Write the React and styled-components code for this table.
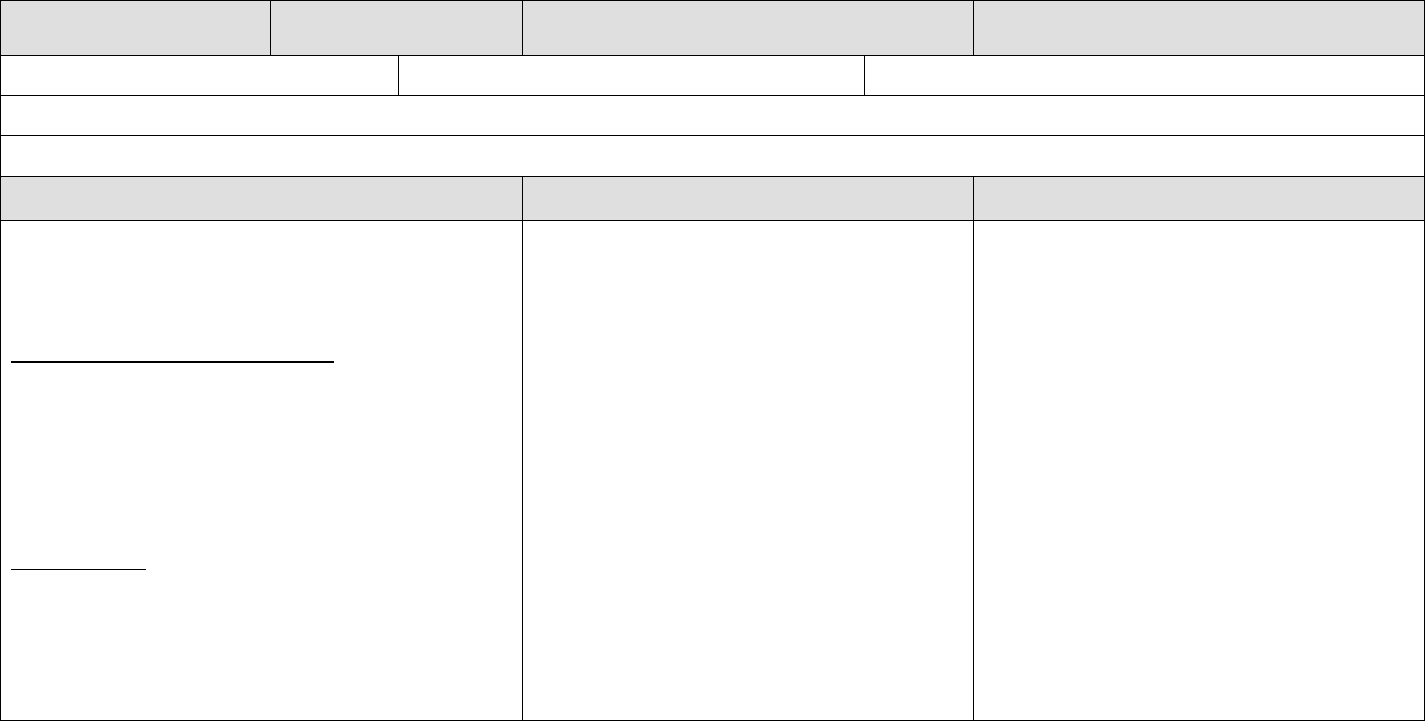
import React from "react";
import styled, { createGlobalStyle } from "styled-components";

const Global = createGlobalStyle`
  html, body { margin: 0; padding: 0; background: #ffffff; }
  body { font-family: "Liberation Sans", Arial, sans-serif; font-size: 14px; color: #000; }
  * { box-sizing: border-box; }
`;

const Table = styled.div`
  display: grid;
  grid-template-columns: 270px 128px 124px 342px 109px 451px;
  grid-template-rows: 55px 40px 40px 41px 44px 500px;
  width: 1425px;
  height: 721px;
  border-left: 1px solid #000;
  border-top: 1px solid #000;
  overflow: hidden;
`;

const Cell = styled.div`
  grid-column: ${(p) => p.$col};
  background: ${(p) => (p.$head ? "#dfdfdf" : "#ffffff")};
  border-right: 1px solid #000;
  border-bottom: 1px solid #000;
  display: flex;
  flex-direction: column;
  align-items: flex-start;
  padding: ${(p) => (p.$pad ? "0 0 0 10px" : "0")};
`;

const Rule = styled.span`
  display: block;
  width: ${(p) => p.$w}px;
  height: 0;
  margin-top: ${(p) => p.$top}px;
  border-bottom: ${(p) => p.$thick}px solid #000;
`;

const rows = [
  { head: true, cells: ["1 / 2", "2 / 4", "4 / 6", "6 / 7"] },
  { head: false, cells: ["1 / 3", "3 / 5", "5 / 7"] },
  { head: false, cells: ["1 / 7"] },
  { head: false, cells: ["1 / 7"] },
  { head: true, cells: ["1 / 4", "4 / 6", "6 / 7"] },
];

export default function App() {
  return (
    <>
      <Global />
      <Table>
        {rows.map((r, i) =>
          r.cells.map((c, j) => <Cell key={`${i}-${j}`} $col={c} $head={r.head} />)
        )}
        <Cell $col="1 / 4" $pad>
          <Rule $w={323} $top={140} $thick={2} />
          <Rule $w={135} $top={206} $thick={1} />
        </Cell>
        <Cell $col="4 / 6" />
        <Cell $col="6 / 7" />
      </Table>
    </>
  );
}
